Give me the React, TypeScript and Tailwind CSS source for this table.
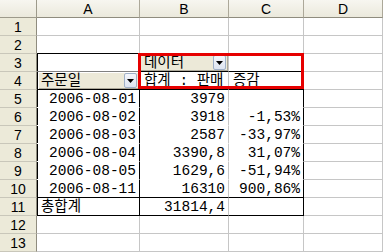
import React from "react";

const G = "#c6c6c6";

type CellSpec = {
  text?: string;
  align?: "left" | "right";
  r?: string; // right border color class
  b?: string; // bottom border color class
  extra?: string;
  button?: boolean;
  dropdown?: boolean;
};

function Dropdown() {
  return (
    <div className="ml-auto mr-[2px] mb-[1px] flex h-[15px] w-[13px] shrink-0 items-center justify-center rounded-[2px] border border-[#9fb0c8] bg-[linear-gradient(#f4f6fb,#dde4f0)]">
      <svg width="7" height="4" viewBox="0 0 7 4">
        <path d="M0 0H7L3.5 4Z" fill="#000" />
      </svg>
    </div>
  );
}

function Cell({ spec }: { spec: CellSpec }) {
  const r = spec.r ?? "border-r-[#c6c6c6]";
  const b = spec.b ?? "border-b-[#c6c6c6]";
  return (
    <div
      className={`flex items-end overflow-hidden whitespace-nowrap border-r border-b ${r} ${b} ${
        spec.align === "right" ? "justify-end pr-[3px]" : "justify-start pl-[4px]"
      } ${spec.extra ?? ""}`}
    >
      {spec.text !== undefined && (
        <span className="pb-[1px] text-[14.5px] leading-[14px] text-black">{spec.text}</span>
      )}
      {spec.dropdown && <Dropdown />}
    </div>
  );
}

const BLK_L = "shadow-[inset_1px_0_0_#000]";
const BTN_L =
  "bg-[#ece9d8] shadow-[inset_1px_0_0_#000,inset_2px_1px_0_#fff,inset_-1px_-1px_0_#aca899]";
const BTN =
  "bg-[#ece9d8] shadow-[inset_1px_1px_0_#fff,inset_-1px_-1px_0_#aca899]";

const rows: CellSpec[][] = [];
for (let i = 1; i <= 13; i++) rows.push([{}, {}, {}, {}]);

// row 2: top border of pivot
rows[1][0] = { b: "border-b-black" };
rows[1][1] = { b: "border-b-black" };
rows[1][2] = { b: "border-b-black" };

// row 3
rows[2][0] = { extra: BLK_L, b: "border-b-[#808080]" };
rows[2][1] = { text: "데이터", extra: BTN, dropdown: true, b: "border-b-black" };
rows[2][2] = { r: "border-r-black", b: "border-b-black" };

// row 4
rows[3][0] = { text: "주문일", extra: BTN_L, dropdown: true, r: "border-r-black", b: "border-b-black" };
rows[3][1] = { text: "합계 : 판매", b: "border-b-black" };
rows[3][2] = { text: "증감", r: "border-r-black", b: "border-b-black" };

const data: [string, string, string][] = [
  ["2006-08-01", "3979", ""],
  ["2006-08-02", "3918", "-1,53%"],
  ["2006-08-03", "2587", "-33,97%"],
  ["2006-08-04", "3390,8", "31,07%"],
  ["2006-08-05", "1629,6", "-51,94%"],
  ["2006-08-11", "16310", "900,86%"],
];
data.forEach(([a, b, c], k) => {
  const last = k === data.length - 1;
  const bb = last ? "border-b-black" : "border-b-white";
  rows[4 + k][0] = { text: a, align: "right", extra: BLK_L, r: "border-r-black", b: bb };
  rows[4 + k][1] = { text: b, align: "right", b: bb };
  rows[4 + k][2] = { text: c || undefined, align: "right", r: "border-r-black", b: bb };
});

// row 11
rows[10][0] = { text: "총합계", extra: BLK_L, r: "border-r-black", b: "border-b-black" };
rows[10][1] = { text: "31814,4", align: "right", b: "border-b-black" };
rows[10][2] = { r: "border-r-black", b: "border-b-black" };

export default function App() {
  return (
    <div className="relative h-[252px] w-[383px] overflow-hidden bg-white font-['Liberation_Mono','Noto_Sans_CJK_KR',monospace]">
      <div className="grid grid-cols-[37px_103px_89px_75px_79px] grid-rows-[18px_repeat(13,18px)]">
        {/* header row */}
        <div className="border-r border-b border-r-[#9d9a8b] border-b-[#9d9a8b] bg-[linear-gradient(#f7f6f0,#ebe9dc)]" />
        {["A", "B", "C", "D"].map((c) => (
          <div
            key={c}
            className="flex items-center justify-center border-r border-b border-r-[#aca899] border-b-[#8f8c7e] bg-[linear-gradient(#f7f6f0,#ebe9dc)] font-['Liberation_Sans',sans-serif] text-[14px] leading-none text-black"
          >
            {c}
          </div>
        ))}
        {rows.map((row, i) => (
          <React.Fragment key={i}>
            <div className="flex items-end justify-center border-r border-b border-r-[#8f8c7e] border-b-[#c9c7ba] bg-[#ecead9] pb-[1px] font-['Liberation_Sans',sans-serif] text-[14px] leading-[14px] text-black">
              {i + 1}
            </div>
            {row.map((spec, j) => (
              <Cell key={j} spec={spec} />
            ))}
          </React.Fragment>
        ))}
      </div>
      <div className="absolute left-[138px] top-[53px] h-[36px] w-[166px] border-[3px] border-[#e60000]" />
    </div>
  );
}
